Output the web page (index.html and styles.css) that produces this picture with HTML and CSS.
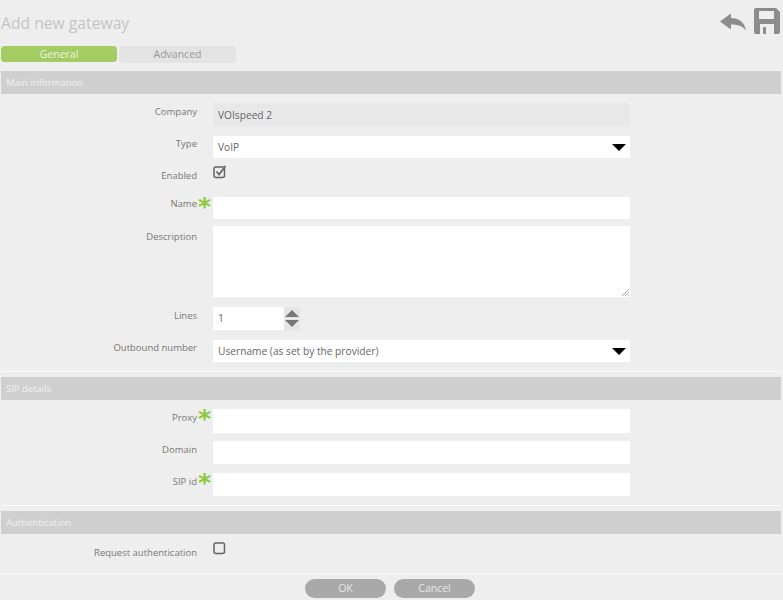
FILE: index.html
```html
<!DOCTYPE html>
<html lang="en">
<head>
<meta charset="utf-8">
<title>Add new gateway</title>
<link rel="stylesheet" href="styles.css">
</head>
<body>
<header class="top">
  <h1 class="title">Add new gateway</h1>
  <div class="actions">
    <svg class="icon-back" viewBox="0 0 26 18" aria-hidden="true"><path d="M0 8.500L11 0.500V5C18.500 5 24.500 9 26 17.500C22.500 13 18 11.500 11 11.500V16.500Z"/></svg>
    <svg class="icon-save" viewBox="0 0 26 26" aria-hidden="true"><path fill-rule="evenodd" d="M2 0H22L26 4V24A2 2 0 0 1 24 26H2A2 2 0 0 1 0 24V2A2 2 0 0 1 2 0ZM5 3V11H20V3ZM6 16V26H20V16ZM9 19H12V26H9Z"/></svg>
  </div>
</header>
<nav class="tabs">
  <div class="tab tab-active">General</div>
  <div class="tab">Advanced</div>
</nav>
<section class="section sec-main">
  <h2 class="head">Main information</h2>
  <div class="row r-company"><label class="lab">Company</label><div class="field readonly">VOIspeed 2</div></div>
  <div class="row r-type"><label class="lab">Type</label><div class="field select">VoIP<span class="caret"></span></div></div>
  <div class="row r-enabled"><label class="lab">Enabled</label>
    <svg class="check" viewBox="0 0 14 14" aria-hidden="true"><rect x="1" y="2" width="10.500" height="10.500" rx="2"/><path class="tick" d="M3.500 6.500L6 9.500L12.500 1"/></svg>
  </div>
  <div class="row r-name"><label class="lab">Name<span class="req">*</span></label><div class="field"></div></div>
  <div class="row r-desc"><label class="lab">Description</label><div class="field area"><svg class="grip" viewBox="0 0 8 8" aria-hidden="true"><path d="M1 8L8 1M4 8L8 4M7 8L8 7"/></svg></div></div>
  <div class="row r-lines"><label class="lab">Lines</label><div class="field short">1</div>
    <div class="spin"><span class="up"></span><span class="down"></span></div>
  </div>
  <div class="row r-out"><label class="lab">Outbound number</label><div class="field select">Username (as set by the provider)<span class="caret"></span></div></div>
</section>
<section class="section sec-sip">
  <h2 class="head">SIP details</h2>
  <div class="row r-proxy"><label class="lab">Proxy<span class="req">*</span></label><div class="field"></div></div>
  <div class="row r-domain"><label class="lab">Domain</label><div class="field"></div></div>
  <div class="row r-sip"><label class="lab">SIP id<span class="req">*</span></label><div class="field"></div></div>
</section>
<section class="section sec-auth">
  <h2 class="head">Authentication</h2>
  <div class="row r-auth"><label class="lab">Request authentication</label>
    <svg class="check" viewBox="0 0 14 14" aria-hidden="true"><rect x="1" y="2" width="10.500" height="10.500" rx="2"/></svg>
  </div>
</section>
<footer class="foot">
  <div class="btn">OK</div>
  <div class="btn">Cancel</div>
</footer>
</body>
</html>
```
FILE: styles.css
```css
* { box-sizing: border-box; }
html, body { height: 100%; }
body {
  margin: 0;
  overflow: hidden;
  background: #eeeeee;
  color: #777;
  font: 9.500px/14px "Open Sans", "Liberation Sans", sans-serif;
}
.top {
  display: flex;
  justify-content: space-between;
  align-items: flex-start;
  height: 46px;
  padding: 8px 3px 0 1px;
}
.title {
  margin: 5px 0 0;
  font-size: 15.700px;
  line-height: 20px;
  font-weight: 400;
  color: #c4c4c4;
}
.actions { display: flex; align-items: flex-start; gap: 8px; }
.icon-back { width: 26px; height: 18px; margin-top: 5px; fill: #8c8c8c; }
.icon-save { width: 26px; height: 26px; fill: #8c8c8c; }
.tabs { display: flex; gap: 2px; height: 17px; padding-left: 1px; }
.tab {
  width: 117px;
  height: 17px;
  border-radius: 4px;
  background: #e3e3e3;
  color: #999;
  text-align: center;
  font-size: 10.500px;
  line-height: 17px;
}
.tab-active { width: 116px; height: 16px; line-height: 16px; background: #a3cc62; color: #eef5e0; }
.section {
  margin: 0 2px 0 1px;
  border-bottom: 1px solid #fafafa;
}
.sec-main { margin-top: 8px; height: 301px; }
.sec-sip { margin-top: 5px; height: 129px; }
.sec-auth { margin-top: 5px; height: 63px; }
.head {
  margin: 0;
  height: 23px;
  padding-left: 5px;
  background: #cfcfcf;
  color: #f1f1f1;
  font-size: 9.500px;
  font-weight: 400;
  line-height: 23px;
}
.row { display: flex; align-items: flex-start; }
.lab {
  display: block;
  position: relative;
  width: 196px;
  flex: none;
  text-align: right;
}
.req {
  position: absolute;
  left: 197px;
  top: -3px;
  color: #8fc93a;
  font: 700 25px/25px "DejaVu Sans", sans-serif;
}
.field {
  position: relative;
  width: 417px;
  height: 22px;
  margin-left: 16px;
  padding-left: 5px;
  background: #fff;
  color: #666;
  font-size: 10.200px;
  line-height: 23px;
}
.readonly { height: 24px; background: #e8e8e8; line-height: 25px; }
.select { color: #666; }
.caret {
  position: absolute;
  right: 4px;
  top: 8px;
  border-style: solid;
  border-width: 7px 7px 0;
  border-color: #000 transparent transparent;
}
.area { height: 71px; }
.grip {
  position: absolute;
  right: 1px;
  bottom: 1px;
  width: 8px;
  height: 8px;
  fill: none;
  stroke: #999;
  stroke-width: 0.800;
}
.short { width: 71px; height: 23px; }
.spin {
  display: flex;
  flex-direction: column;
  align-items: center;
  gap: 3px;
  width: 16px;
  height: 24px;
  padding-top: 3px;
  background: #e6e6e6;
}
.up, .down { width: 0; height: 0; border-style: solid; }
.up { border-width: 0 7px 7px; border-color: transparent transparent #777; }
.down { border-width: 7px 7px 0; border-color: #777 transparent transparent; }
.check {
  width: 14px;
  height: 14px;
  margin-left: 16px;
  fill: none;
  stroke: #666;
  stroke-width: 1.500;
}
.tick { stroke-width: 1.800; }
.r-company { margin-top: 9px; }
.r-company .lab { padding-top: 2px; }
.r-type { margin-top: 9px; }
.r-type .lab { padding-top: 1px; }
.r-enabled { margin-top: 7px; height: 32px; }
.r-enabled .lab { padding-top: 4px; }
.r-desc { margin-top: 7px; }
.r-desc .lab { padding-top: 4px; }
.r-lines { margin-top: 10px; }
.r-lines .lab { padding-top: 2px; }
.r-out { margin-top: 9px; }
.r-out .lab { padding-top: 1px; }
.r-proxy { margin-top: 9px; }
.r-proxy .field { height: 24px; }
.r-proxy .lab { padding-top: 2px; }
.r-domain { margin-top: 8px; }
.r-domain .field { height: 23px; }
.r-domain .lab { padding-top: 2px; }
.r-sip { margin-top: 9px; }
.r-sip .field { height: 23px; }
.r-sip .lab { padding-top: 2px; }
.r-auth { margin-top: 7px; }
.r-auth .lab { padding-top: 5px; }
.foot {
  display: flex;
  justify-content: flex-start;
  gap: 8px;
  margin-top: 5px;
  padding-left: 305px;
}
.btn {
  width: 81px;
  height: 19px;
  border-radius: 10px;
  background: #a9a9a9;
  color: #e8e8e8;
  text-align: center;
  font-size: 10.500px;
  line-height: 19px;
}
```
